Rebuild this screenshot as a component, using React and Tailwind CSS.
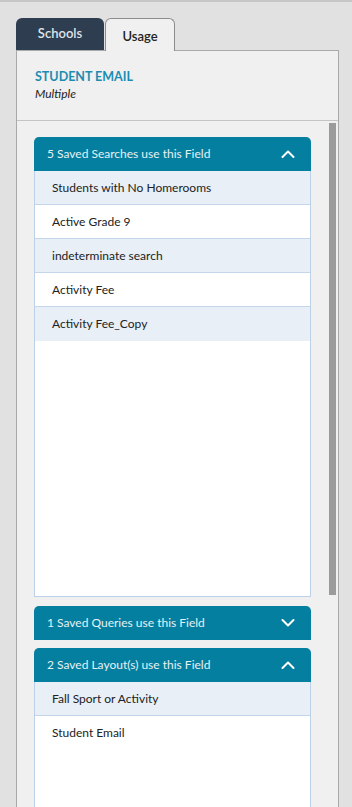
import { useState } from "react";

const font = { fontFamily: "Lato, 'Noto Sans', sans-serif" };

const Chevron = ({ up }) => (
  <svg width="14" height="8" viewBox="0 0 14 8" fill="none" className="mr-[16px]">
    <path
      d={up ? "M1.5 7L7 1.5L12.5 7" : "M1.5 1L7 6.5L12.5 1"}
      stroke="white"
      strokeWidth="2"
      strokeLinecap="round"
      strokeLinejoin="round"
    />
  </svg>
);

const Section = ({ title, items, open, bodyHeight }) => (
  <div className="flex flex-col">
    <div className="flex h-[34px] items-center justify-between rounded-t-[5px] bg-[#047fa0] pl-[13px]">
      <span className="text-[12px] text-[#e6f1f5]">{title}</span>
      <Chevron up={open} />
    </div>
    {open && (
      <div className={`flex flex-col border border-t-0 border-[#bcd1e8] bg-white ${bodyHeight}`}>
        {items.map((item, i) => (
          <div
            key={item}
            className={`flex h-[34px] shrink-0 items-center pl-[17px] text-[12px] text-[#222] ${
              i % 2 === 0 ? "bg-[#e8eff7]" : "bg-white"
            } ${i === items.length - 1 ? "" : "border-b border-[#c3d6ea]"}`}
          >
            {item}
          </div>
        ))}
      </div>
    )}
  </div>
);

export default function App() {
  const [tab] = useState("Usage");

  return (
    <div className="h-[807px] overflow-hidden border-t-2 border-[#c6c6c6] bg-[#e1e1e1] pl-[16px] pt-[16px]" style={font}>
      <div className="flex items-end">
        <div className="flex h-[32px] w-[88px] items-center justify-center rounded-t-[6px] bg-[#2e3e50] text-[13px] font-semibold text-[#dfe3e8]">
          Schools
        </div>
        <div className="relative z-10 -mb-px ml-[1px] flex h-[33px] w-[70px] items-center justify-center rounded-t-[6px] border border-b-0 border-[#8c8c8c] bg-[#f0f0f0] pt-[3px] text-[13px] font-semibold text-[#222]">
          {tab}
        </div>
      </div>
      <div className="flex h-[760px] w-[323px] flex-col border border-[#a9a9a9] bg-[#f0f0f0]">
        <div className="h-[70px] shrink-0 border-b border-[#c4c4c4] pl-[18px] pt-[17px]">
          <div className="text-[12.5px] font-bold leading-[18px] text-[#1c8db1]">STUDENT EMAIL</div>
          <div className="text-[12px] italic leading-[16px] text-[#222]">Multiple</div>
        </div>
        <div className="flex min-h-0 flex-1">
          <div className="flex w-[294px] flex-col gap-[8px] pl-[17px] pt-[16px]">
            <Section
              title="5 Saved Searches use this Field"
              open
              bodyHeight="h-[426px]"
              items={[
                "Students with No Homerooms",
                "Active Grade 9",
                "indeterminate search",
                "Activity Fee",
                "Activity Fee_Copy",
              ]}
            />
            <div className="mt-px">
              <Section title="1 Saved Queries use this Field" open={false} items={[]} />
            </div>
            <Section
              title="2 Saved Layout(s) use this Field"
              open
              bodyHeight="h-[200px]"
              items={["Fall Sport or Activity", "Student Email"]}
            />
          </div>
          <div className="ml-[18px] mt-[2px] h-[472px] w-[7px] bg-[#9b9b9b]" />
        </div>
      </div>
    </div>
  );
}
